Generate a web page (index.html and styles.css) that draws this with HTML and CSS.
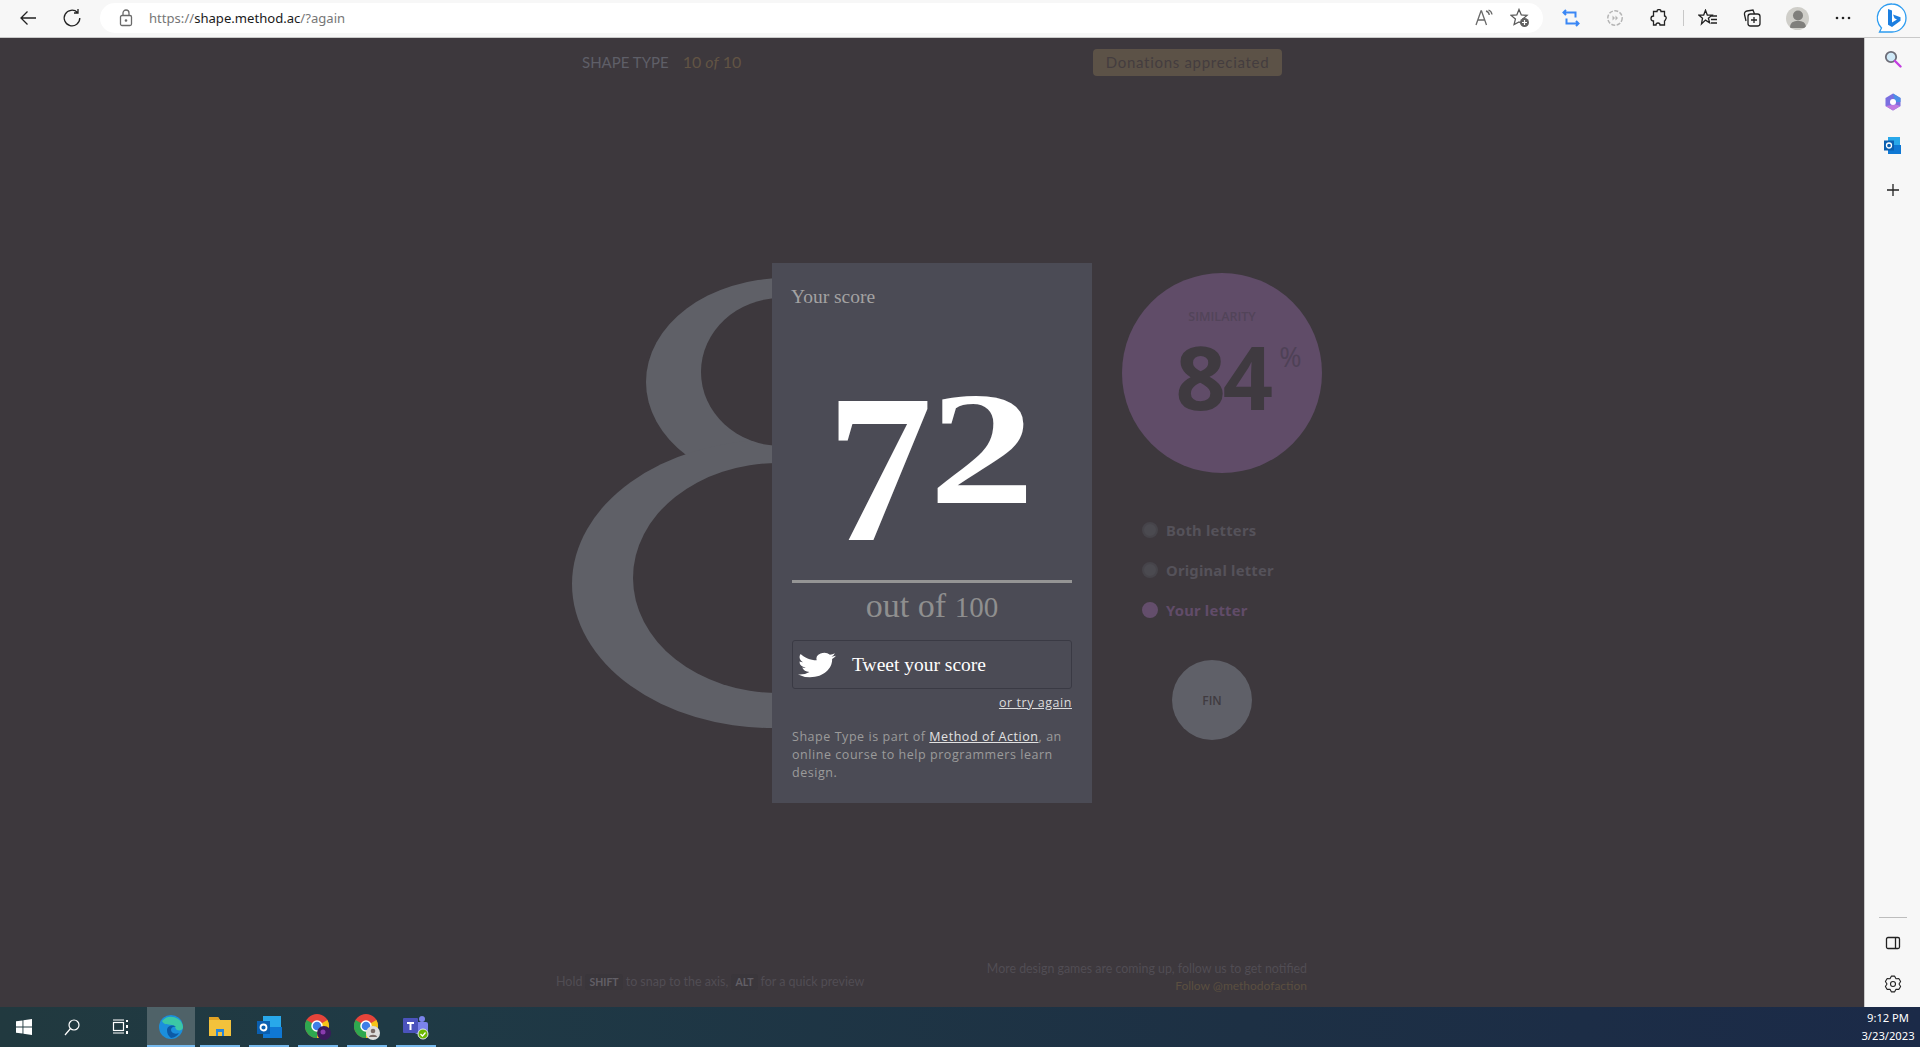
FILE: index.html
```html
<!DOCTYPE html>
<html lang="en">
<head>
<meta charset="utf-8">
<title>Shape Type</title>
<link rel="stylesheet" href="styles.css">
</head>
<body>
<header class="toolbar">
  <span class="cell cell-back"><svg width="20" height="20" viewBox="0 0 20 20" class="ln"><path d="M18 10H3M9.500 3.500 3 10l6.500 6.500"/></svg></span>
  <span class="cell cell-reload"><svg width="20" height="20" viewBox="0 0 20 20" class="ln"><path d="M15.500 4.500A7.800 7.800 0 1 0 17.800 10M16 1v4h-4"/></svg></span>
  <div class="pill">
    <span class="lock"><svg width="14" height="18" viewBox="0 0 14 18" class="ln gray"><rect x="1.500" y="6.500" width="11" height="10" rx="1.500"/><path d="M4 6.500V4a3 3 0 0 1 6 0v2.500"/><circle cx="7" cy="11.500" r=".7"/></svg></span>
    <span class="url"><span class="dim">https://</span>shape.method.ac<span class="dim">/?again</span></span>
    <span class="pill-icons">
      <svg width="18" height="18" viewBox="0 0 18 18" class="ln gray"><path d="M1 16 6 2h.5l5 14M3 11h7M11 2c2 .5 3 2 3.300 4M13.500 1c2 .7 3.200 2.500 3.500 4.500"/></svg>
      <svg width="20" height="20" viewBox="0 0 20 20"><path class="ln-path" d="M9 1.500 11.300 7l5.700.4-4.300 3.700 1.300 5.400L9 14l-4.900 2.500 1.300-5.400L1.100 7.400 6.800 7z"/><circle cx="14.500" cy="14.500" r="4.500" fill="#5f5f5f"/><path d="M14.500 12v5M12 14.500h5" stroke="#fff" stroke-width="1.200"/></svg>
    </span>
  </div>
  <span class="cell cell-loop"><svg width="18" height="18" viewBox="0 0 18 18" fill="none" stroke="#3b87f5" stroke-width="2"><path d="M4 1 1.500 3.500 4 6M2 3.500h11.500v5M14 17l2.500-2.500L14 12M16 14.500H4.500v-5"/></svg></span>
  <span class="cell cell-next"><svg width="18" height="18" viewBox="0 0 18 18" fill="none" stroke="#b5b5b5" stroke-width="1.500"><circle cx="9" cy="9" r="7.200" stroke-dasharray="4 1.500"/><path d="M6.500 6.500 9 9l-2.500 2.500zM9.500 6.500 12 9l-2.500 2.500z" fill="#b5b5b5" stroke="none"/></svg></span>
  <span class="cell cell-ext"><svg width="18" height="18" viewBox="0 0 18 18" class="ln"><path d="M7 2.500a2 2 0 0 1 4 0h3.500V7a2 2 0 0 1 1 3.500 2 2 0 0 1-1 1.500v4H10a2 2 0 0 0-4 0H3.500v-4a2.500 2.500 0 0 1 0-5V2.500z"/></svg></span>
  <span class="sep"></span>
  <span class="cell cell-fav"><svg width="20" height="18" viewBox="0 0 20 18" class="ln"><path d="M7.500 1.200 9.300 6l4.700.2-3.600 3 1.200 4.500-4.100-2.600-4 3.800 1-5.700-3.500-3L5.700 6zM13 7h6M13 10.500h6M13 14h6"/></svg></span>
  <span class="cell cell-coll"><svg width="18" height="18" viewBox="0 0 18 18" class="ln"><rect x="5" y="5" width="12" height="12" rx="2.500"/><path d="M3 12 1.500 5.500A3 3 0 0 1 4 2l6-1 1.500 4M11 8v6M8 11h6"/></svg></span>
  <span class="avatar"><svg width="22" height="22" viewBox="0 0 22 22"><circle cx="11" cy="7.500" r="5" fill="#807f7c"/><path d="M3 20c0-6 3.500-7 8-7s8 1 8 7z" fill="#807f7c"/></svg></span>
  <span class="cell cell-more"><svg width="16" height="4" viewBox="0 0 16 4" fill="#222"><circle cx="2" cy="2" r="1.300"/><circle cx="8" cy="2" r="1.300"/><circle cx="14" cy="2" r="1.300"/></svg></span>
  <span class="bing"><svg width="32" height="32" viewBox="0 0 32 32"><path d="M16 2a14 14 0 0 1 0 28H3.500l2-4A14 14 0 0 1 16 2z" fill="#fff" stroke="#2d9cf0" stroke-width="1.300"/><path d="M12 7l4 1.400v12l5-3-2.500-1.200-1.500-3.600 7.500 2.700v3.400L16 25l-4-2.200z" fill="#1c7fe0"/></svg></span>
</header>

<div class="window">
  <main class="stage">
    <div class="stage-head">
      <p class="title">SHAPE TYPE<span class="count">10 <em>of</em> 10</span></p>
      <a class="donate">Donations appreciated</a>
    </div>

    <div class="board">
      <div class="figure">
        <svg class="shape" width="200" height="540" viewBox="572 263 200 540">
          <ellipse class="ink" cx="785" cy="382" rx="139" ry="104"/>
          <ellipse class="ink" cx="772" cy="584" rx="200" ry="144"/>
          <ellipse class="hole" cx="781" cy="372" rx="80" ry="74"/>
          <ellipse class="hole" cx="778" cy="578" rx="145" ry="115"/>
        </svg>
      </div>

      <section class="panel">
        <h2 class="panel-title">Your score</h2>
        <div class="score"><span class="seven">7</span><span class="two">2</span></div>
        <div class="out-of">out of <span class="old">100</span></div>
        <a class="tweet">
          <svg class="bird" width="38" height="30" viewBox="0 0 24 24" preserveAspectRatio="none"><path fill="#fff" d="M23.953 4.570a10 10 0 0 1-2.825.775 4.958 4.958 0 0 0 2.163-2.723c-.951.555-2.005.959-3.127 1.184a4.920 4.920 0 0 0-8.384 4.482C7.690 8.095 4.067 6.130 1.640 3.162a4.822 4.822 0 0 0-.666 2.475c0 1.710.870 3.213 2.188 4.096a4.904 4.904 0 0 1-2.228-.616v.060a4.923 4.923 0 0 0 3.946 4.827 4.996 4.996 0 0 1-2.212.085 4.936 4.936 0 0 0 4.604 3.417 9.867 9.867 0 0 1-6.102 2.105c-.390 0-.779-.023-1.170-.067a13.995 13.995 0 0 0 7.557 2.209c9.053 0 13.998-7.496 13.998-13.985 0-.210 0-.420-.015-.630A9.935 9.935 0 0 0 24 4.590z"/></svg>
          Tweet your score
        </a>
        <p class="again"><a>or try again</a></p>
        <p class="about">Shape Type is part of <a>Method of Action</a>, an online course to help programmers learn design.</p>
      </section>

      <aside class="side">
        <div class="similarity">
          <span class="sim-label">SIMILARITY</span>
          <span class="sim-value">84<span class="pct">%</span></span>
        </div>
        <ul class="options">
          <li class="option"><span class="radio"></span>Both letters</li>
          <li class="option"><span class="radio"></span>Original letter</li>
          <li class="option option-on"><span class="radio"></span>Your letter</li>
        </ul>
        <a class="fin">FIN</a>
      </aside>
    </div>

    <footer class="stage-foot">
      <p class="hint">Hold <kbd>SHIFT</kbd> to snap to the axis, <kbd>ALT</kbd> for a quick preview</p>
      <p class="more">More design games are coming up, follow us to get notified<br><a>Follow @methodofaction</a></p>
    </footer>
  </main>

  <nav class="sidebar">
    <span class="side-icon"><svg width="18" height="18" viewBox="0 0 18 18"><circle cx="7" cy="7" r="5.200" fill="#cfe9f7" stroke="#6d6d78" stroke-width="1.800"/><path d="M11 11l5.500 5.500" stroke="#c33fe0" stroke-width="2.400" stroke-linecap="round"/></svg></span>
    <span class="side-icon"><svg width="18" height="18" viewBox="0 0 18 18"><path d="M9 .5 16.500 5v8L9 17.500 1.500 13V5z" fill="#7a6fe0"/><path d="M9 .5 16.500 5v4H11z" fill="#4a8fe6"/><path d="M1.500 13 9 17.500l7.500-4.500-5-1.500z" fill="#c07be0"/><circle cx="9" cy="9" r="3" fill="#fff"/></svg></span>
    <span class="side-icon"><svg width="17" height="17" viewBox="0 0 17 17"><rect x="4" y="0" width="12" height="16" fill="#28a8ea"/><rect x="4" y="8" width="13" height="9" fill="#0f78d4"/><rect x="0" y="3.500" width="10" height="10" fill="#0a5fb0"/><circle cx="5" cy="8.500" r="2.500" fill="none" stroke="#fff" stroke-width="1.300"/></svg></span>
    <span class="side-icon side-icon-plus"><svg width="14" height="14" viewBox="0 0 14 14" class="ln"><path d="M7 1v12M1 7h12"/></svg></span>
    <span class="side-gap"></span>
    <span class="side-rule"></span>
    <span class="side-icon side-icon-panel"><svg width="16" height="14" viewBox="0 0 16 14" class="ln"><rect x="1.500" y="1.500" width="13" height="11" rx="1.500"/><path d="M10.500 1.500v11"/></svg></span>
    <span class="side-icon side-icon-gear"><svg width="18" height="18" viewBox="0 0 18 18" class="ln gear"><circle cx="9" cy="9" r="2.500"/><path d="M7.340 1.170h3.320L12 3.800l2.950-.15 1.650 2.880L15 9l1.600 2.470-1.650 2.880L12 14.200l-1.340 2.630H7.340L6 14.200l-2.950.15-1.650-2.880L3 9 1.400 6.530l1.650-2.880L6 3.800z"/></svg></span>
  </nav>
</div>

<footer class="taskbar">
  <span class="task-sys task-win"><svg width="16" height="16" viewBox="0 0 16 16" fill="#fff"><path d="M0 2.300 6.500 1.400v6.200H0zM7.400 1.300 16 0v7.600H7.400zM0 8.400h6.500v6.200L0 13.700zM7.400 8.400H16V16l-8.600-1.300z"/></svg></span>
  <span class="task-sys"><svg width="16" height="17" viewBox="0 0 16 17" fill="none" stroke="#fff" stroke-width="1.200"><circle cx="10" cy="6" r="5"/><path d="M6.500 9.500 1 16"/></svg></span>
  <span class="task-sys"><svg width="17" height="16" viewBox="0 0 17 16" fill="none" stroke="#fff" stroke-width="1.200"><rect x="1.500" y="3.500" width="10" height="8"/><path d="M1 1h11M1 14h11"/><path d="M14 1h2v2h-2zM14 6h2v3h-2zM14 12h2v3h-2z" fill="#fff" stroke="none"/></svg></span>
  <span class="task-app task-active"><svg width="24" height="24" viewBox="0 0 24 24"><circle cx="12" cy="12" r="12" fill="#1b8fdc"/><path d="M3 6a12 12 0 0 1 21 6c0 3-3 4-6 3-2-1-1-4-5-5C8 9 5 10 3 6z" fill="#3cc7a5"/><path d="M8 15c0-4 6-6 9-3-3-1-5 1-5 3s3 5 8 3a11 11 0 0 1-8 5c-3-2-4-5-4-8z" fill="#0c5aa6"/></svg></span>
  <span class="task-app"><svg width="24" height="20" viewBox="0 0 24 20"><path d="M1 0h9l2 3h11v16H1z" fill="#f3c23c"/><path d="M1 0h9l2 3H1z" fill="#e2a324"/><path d="M8 12h8v7h-2v-4h-4v4H8z" fill="#2a86d8"/></svg></span>
  <span class="task-app"><svg width="25" height="22" viewBox="0 0 25 22"><rect x="6" y="0" width="18" height="20" fill="#28a8ea"/><path d="M6 11h19v11H6z" fill="#0f78d4"/><rect x="0" y="5" width="13" height="13" fill="#0a5fb0"/><circle cx="6.500" cy="11.500" r="3" fill="none" stroke="#fff" stroke-width="1.800"/></svg></span>
  <span class="task-app"><svg width="26" height="26" viewBox="0 0 26 26"><circle cx="12" cy="12" r="12" fill="#e5443a"/><path d="M12 12 22.400 6A12 12 0 0 1 12 24z" fill="#f5c518"/><path d="M12 12 12 24A12 12 0 0 1 1.600 6z" fill="#2fa84f"/><circle cx="12" cy="12" r="5" fill="#3f7fe8" stroke="#fff" stroke-width="1.500"/><circle cx="19" cy="19" r="7" fill="#3b1a5c"/><circle cx="18" cy="18" r="2.500" fill="#8a3cae"/></svg></span>
  <span class="task-app"><svg width="26" height="26" viewBox="0 0 26 26"><circle cx="12" cy="12" r="12" fill="#e5443a"/><path d="M12 12 22.400 6A12 12 0 0 1 12 24z" fill="#f5c518"/><path d="M12 12 12 24A12 12 0 0 1 1.600 6z" fill="#2fa84f"/><circle cx="12" cy="12" r="5" fill="#3f7fe8" stroke="#fff" stroke-width="1.500"/><circle cx="19" cy="19" r="7" fill="#ddd"/><circle cx="19" cy="17" r="2.300" fill="#7a6a66"/><path d="M15 23c0-3 8-3 8 0z" fill="#7a6a66"/></svg></span>
  <span class="task-app"><svg width="26" height="26" viewBox="0 0 26 26"><circle cx="19" cy="5" r="3" fill="#7b83eb"/><rect x="12" y="8" width="13" height="12" rx="2" fill="#7b83eb"/><rect x="0" y="4" width="15" height="15" rx="1" fill="#4b53bc"/><path d="M4 8h7v2H8.500v6h-2v-6H4z" fill="#fff"/><circle cx="20" cy="20" r="5" fill="#6bb700" stroke="#dfe6e6"/><path d="M17.500 20l2 2 3-3.500" fill="none" stroke="#fff" stroke-width="1.200"/></svg></span>
  <span class="clock">9:12 PM<br>3/23/2023</span>
</footer>
</body>
</html>
```

FILE: styles.css
```css
* { box-sizing: border-box; }
html, body { margin: 0; height: 100%; }
body {
  width: 1920px;
  height: 1047px;
  overflow: hidden;
  display: flex;
  flex-direction: column;
  font-family: "Open Sans", "Noto Sans", sans-serif;
  background: #3d383d;
}
p, h2, ul { margin: 0; padding: 0; }
svg { display: block; }

.ln { fill: none; stroke: #222; stroke-width: 1.300; }
.ln.gray { stroke: #6a6a6a; }
.ln.gear { stroke-linejoin: round; stroke-width: 1.100; }
.ln-path { fill: none; stroke: #5a5a5a; stroke-width: 1.300; }

/* Browser toolbar */
.toolbar {
  height: 38px;
  flex: none;
  display: flex;
  align-items: center;
  background: #f7f7f7;
  border-bottom: 1px solid #c9c9c9;
  padding-bottom: 1px;
}
.cell { display: flex; justify-content: center; flex: none; width: 20px; }
.cell-back { margin-left: 18px; }
.cell-reload { margin-left: 24px; }
.pill {
  margin-left: 18px;
  width: 1443px;
  height: 30px;
  background: #fff;
  border-radius: 15px;
  display: flex;
  align-items: center;
  padding-left: 19px;
}
.lock { width: 30px; flex: none; }
.url { font-family: "Noto Sans", sans-serif; font-size: 13.100px; color: #1a1a1a; }
.dim { color: #767676; }
.pill-icons { margin-left: auto; margin-right: 13px; display: flex; align-items: center; gap: 17px; }
.cell-loop { margin-left: 18px; }
.cell-next { margin-left: 24px; }
.cell-ext { margin-left: 24px; }
.sep { width: 1px; height: 16px; background: #c8c8c8; margin-left: 14px; flex: none; }
.cell-fav { margin-left: 14px; }
.cell-coll { margin-left: 24px; }
.avatar {
  width: 23px; height: 23px; margin-left: 24px; flex: none;
  border-radius: 50%; background: #cfcec9; overflow: hidden;
  display: flex; justify-content: center; align-items: flex-end;
}
.cell-more { margin-left: 24px; }
.bing { margin-left: 23px; flex: none; }

/* Window */
.window { flex: 1; display: flex; min-height: 0; }
.stage { flex: 1; display: flex; flex-direction: column; background: #3d383d; }

.stage-head {
  display: flex;
  align-items: center;
  justify-content: space-between;
  margin: 11px 0 0 582px;
  width: 700px;
  height: 27px;
}
.title { font-family: "Lato", sans-serif; font-size: 15px; color: #5f5f68; padding-bottom: 3px; }
.count { margin-left: 14px; color: #625444; font-family: "Lato", sans-serif; font-size: 16px; }
.donate {
  width: 189px;
  height: 27px;
  line-height: 27px;
  text-align: center;
  background: #5c5247;
  border-radius: 4px;
  color: #443d3f;
  font-family: "Lato", sans-serif;
  font-size: 15px;
  letter-spacing: .7px;
}

.board { display: flex; margin: 187px 0 0 572px; }
.figure { width: 200px; height: 540px; flex: none; }
.shape { overflow: visible; }
.ink { fill: #5f6067; }
.hole { fill: #3d383d; }

.panel {
  position: relative;
  width: 320px;
  height: 540px;
  flex: none;
  background: #4b4b55;
  padding: 0 20px;
  font-family: "Liberation Serif", serif;
}
.panel-title { font-size: 19.500px; font-weight: 400; color: #a3a2a2; padding-top: 22px; line-height: 24px; margin-left: -1px; }
.score {
  height: 274px;
  border-bottom: 3px solid #959595;
  color: #fff;
  font-weight: 700;
  display: flex;
  justify-content: center;
  align-items: flex-start;
  line-height: 1;
  padding-right: 10px;
}
.seven { font-size: 212px; margin: 54px 0 0 -6px; }
.two { font-size: 160px; margin: 60px 0 0 9px; transform: scaleX(1.33); }
.out-of { text-align: center; font-size: 34px; color: #8f8f8f; line-height: 36px; margin-top: 5px; }
.old { font-size: 29px; }
.tweet {
  display: flex;
  align-items: center;
  margin-top: 15px;
  height: 49px;
  border: 1px solid #3a3a44;
  border-radius: 3px;
  color: #fff;
  font-size: 19.500px;
  padding-left: 5px;
}
.bird { margin-right: 16px; flex: none; }
.again { text-align: right; font-family: "Open Sans", sans-serif; font-size: 12.500px; letter-spacing: .55px; line-height: 18px; margin-top: 5px; }
.again a { color: #dcdcdc; text-decoration: underline; }
.about { font-family: "Open Sans", sans-serif; font-size: 12.500px; letter-spacing: .55px; line-height: 18px; color: #9b9b9b; margin-top: 16px; }
.about a { color: #e2e2e2; text-decoration: underline; }

.side { margin-left: 30px; width: 240px; }
.similarity {
  width: 200px;
  height: 200px;
  margin-top: 10px;
  border-radius: 50%;
  background: #604c68;
  display: flex;
  flex-direction: column;
  align-items: center;
  padding-top: 34px;
}
.sim-label { font-family: "Open Sans", sans-serif; font-weight: 600; font-size: 12.500px; line-height: 20px; color: #524459; }
.sim-value {
  font-family: "Open Sans", sans-serif;
  font-weight: 700;
  font-size: 88px;
  line-height: 90px;
  letter-spacing: -3px;
  color: #3f3a40;
  margin: 4px 0 0 33px;
  display: flex;
  align-items: flex-start;
}
.pct { font-size: 27px; font-weight: 400; line-height: 30px; letter-spacing: 0; color: #4e4156; margin: 11px 0 0 9px; }

.options { list-style: none; margin-top: 49px; margin-left: 20px; }
.option {
  display: flex;
  align-items: center;
  gap: 8px;
  height: 16px;
  margin-bottom: 24px;
  font-family: "Noto Sans", sans-serif;
  font-weight: 700;
  font-size: 14.800px;
  letter-spacing: .2px;
  line-height: 14px;
  color: #55525a;
}
.radio { width: 16px; height: 16px; border-radius: 50%; background: #4b4a50; border: 2px solid #46444a; flex: none; }
.option-on { color: #614c69; }
.option-on .radio { background: #644e6c; border-color: #644e6c; }
.fin {
  display: flex;
  align-items: center;
  justify-content: center;
  width: 80px;
  height: 80px;
  margin: 42px 0 0 50px;
  border-radius: 50%;
  background: #5f6068;
  color: #403b40;
  font-size: 12px;
  font-weight: 600;
}

.stage-foot {
  margin: auto 0 0 556px;
  width: 751px;
  display: flex;
  justify-content: space-between;
  align-items: flex-end;
  padding-bottom: 13px;
  font-family: "Lato", sans-serif;
  font-size: 12.500px;
  color: #514d54;
}
.hint { line-height: 20px; padding-bottom: 2px; word-spacing: -.15px; }
kbd {
  font-family: "Lato", sans-serif;
  font-weight: 700;
  font-size: 10.500px;
  color: #625f66;
  background: #3a363b;
  border-radius: 3px;
  padding: 2px 4px;
  margin: 0;
}
.more { text-align: right; line-height: 17px; font-size: 12.400px; }
.more a { color: #5b4f40; font-size: 12px; }

.sidebar {
  width: 56px;
  flex: none;
  background: #f7f7f7;
  border-left: 1px solid #c9c9c9;
  display: flex;
  flex-direction: column;
  align-items: center;
  padding-top: 12px;
}
.side-icon { height: 18px; display: flex; align-items: center; margin-bottom: 25px; }
.side-icon-plus { margin-top: 2px; }
.side-gap { flex: 1; }
.side-rule { width: 28px; height: 1px; background: #bdbdbd; margin-bottom: 16px; }
.side-icon-panel { margin-bottom: 23px; }
.side-icon-gear { margin-bottom: 14px; }

/* Taskbar */
.taskbar {
  height: 40px;
  flex: none;
  display: flex;
  align-items: stretch;
  background: linear-gradient(90deg, #21393f 0, #1f3a45 20%, #1d3044 65%, #1b2a48 100%);
}
.task-sys { width: 48px; display: flex; align-items: center; justify-content: center; flex: none; }
.task-win { margin-left: 0; }
.task-app {
  width: 40px;
  margin-right: 9px;
  flex: none;
  display: flex;
  align-items: center;
  justify-content: center;
  border-bottom: 2px solid #76b9ed;
  padding-top: 2px;
}
.task-active { width: 48px; margin: 0 5px 0 3px; background: #4f6268; }
.clock {
  margin-left: auto;
  width: 60px;
  margin-right: 2px;
  color: #fff;
  font-family: "Noto Sans", sans-serif;
  font-size: 11.200px;
  line-height: 18px;
  text-align: center;
  padding-top: 2px;
}
```
